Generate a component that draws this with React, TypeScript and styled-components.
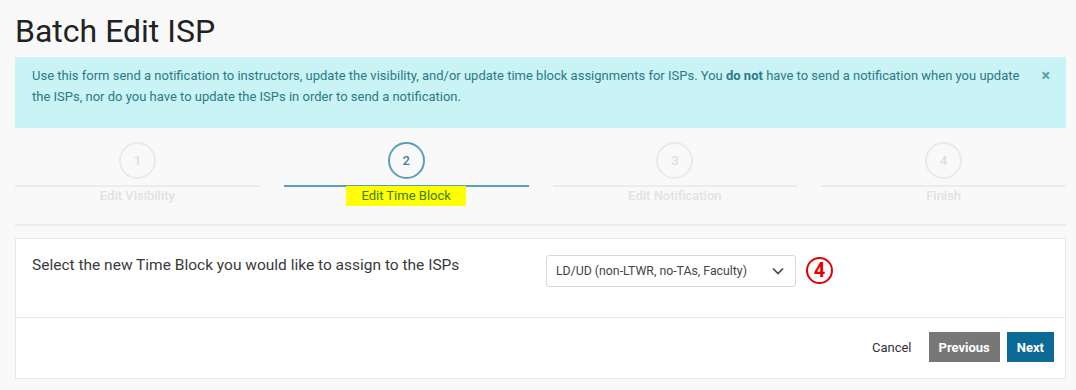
import * as React from 'react';
import styled, { createGlobalStyle } from 'styled-components';

const GlobalStyle = createGlobalStyle`
  html, body {
    margin: 0;
    padding: 0;
    background: #f9f9f9;
    font-family: Roboto, 'Liberation Sans', Arial, sans-serif;
  }
`;

const Page = styled.div`
  padding: 12px 10px 0 15px;
`;

const Title = styled.h1`
  margin: 0 0 6px;
  font-size: 32px;
  line-height: 39px;
  font-weight: 400;
  color: #222;
`;

const Alert = styled.div`
  display: flex;
  align-items: flex-start;
  background: #c9f3f5;
  color: #2b7a86;
  font-size: 13px;
  line-height: 21px;
  padding: 8px 16px 11px 17px;
  min-height: 52px;
`;

const AlertText = styled.p`
  margin: 0;
  flex: 1;
  padding-right: 12px;

  strong {
    font-weight: 700;
  }
`;

const CloseButton = styled.button`
  border: 0;
  background: none;
  color: #5aa0a8;
  font-size: 16px;
  font-weight: 700;
  line-height: 21px;
  padding: 0;
  cursor: pointer;
  font-family: inherit;
`;

const Stepper = styled.div`
  display: grid;
  grid-template-columns: repeat(4, 1fr);
  column-gap: 24px;
  padding: 14px 0 18px;
  border-bottom: 2px solid #ececec;
`;

const Step = styled.div`
  display: flex;
  flex-direction: column;
  align-items: center;
`;

const Circle = styled.div<{ $active?: boolean }>`
  width: 33px;
  height: 33px;
  border-radius: 50%;
  border: 2px solid ${(p) => (p.$active ? '#5b9fc0' : '#eaeaea')};
  color: ${(p) => (p.$active ? '#4a7a9a' : '#dedede')};
  display: flex;
  align-items: center;
  justify-content: center;
  font-size: 13px;
  font-weight: 500;
  margin-bottom: 6px;
`;

const StepLine = styled.div<{ $active?: boolean }>`
  align-self: stretch;
  height: 2px;
  background: ${(p) => (p.$active ? '#5b9fc0' : '#ececec')};
`;

const StepLabel = styled.div<{ $active?: boolean }>`
  font-size: 13px;
  line-height: 20px;
  font-weight: ${(p) => (p.$active ? 400 : 500)};
  color: ${(p) => (p.$active ? '#3b7d1a' : '#e2e2e2')};
  background: ${(p) => (p.$active ? '#ffff00' : 'transparent')};
  padding: 0 15px;
  margin-top: -1px;
`;

const Card = styled.div`
  margin-top: 12px;
  background: #fff;
  border: 1px solid #e8e8e8;
`;

const CardBody = styled.div`
  display: grid;
  grid-template-columns: 514px 1fr;
  padding: 16px 16px 30px;
  border-bottom: 1px solid #e6e6e6;
`;

const Prompt = styled.div`
  font-size: 15.5px;
  line-height: 20px;
  color: #3a3a3a;
`;

const SelectRow = styled.div`
  display: flex;
  align-items: center;
  gap: 10px;
`;

const SelectBox = styled.div`
  width: 250px;
  height: 32px;
  box-sizing: border-box;
  border: 1px solid #d6d9dc;
  border-radius: 3px;
  display: flex;
  align-items: center;
  justify-content: space-between;
  padding: 0 10px 0 9px;
  font-size: 12.3px;
  color: #444;
`;

const Marker = styled.div`
  width: 27px;
  height: 27px;
  box-sizing: border-box;
  border: 2px solid #e60000;
  border-radius: 50%;
  color: #e60000;
  font-size: 20px;
  font-weight: 700;
  display: flex;
  align-items: center;
  justify-content: center;
  line-height: 1;
  margin-top: -2px;
`;

const Footer = styled.div`
  display: flex;
  justify-content: flex-end;
  align-items: center;
  gap: 7px;
  padding: 14px 11px 16px;
`;

const LinkButton = styled.button`
  border: 0;
  background: none;
  font-family: inherit;
  font-size: 13px;
  color: #333;
  padding: 0 10px 0 0;
`;

const SolidButton = styled.button<{ $tone: 'grey' | 'blue' }>`
  border: 0;
  height: 30px;
  padding: 0 10px;
  font-family: inherit;
  font-size: 13px;
  font-weight: 700;
  color: #fff;
  background: ${(p) => (p.$tone === 'grey' ? '#777777' : '#0b6a96')};
`;

const steps = ['Edit Visibility', 'Edit Time Block', 'Edit Notification', 'Finish'];

export default function App() {
  return (
    <Page>
      <GlobalStyle />
      <Title>Batch Edit ISP</Title>
      <Alert>
        <AlertText>
          Use this form send a notification to instructors, update the visibility, and/or update time block
          assignments for ISPs. You <strong>do not</strong> have to send a notification when you update the
          ISPs, nor do you have to update the ISPs in order to send a notification.
        </AlertText>
        <CloseButton>×</CloseButton>
      </Alert>
      <Stepper>
        {steps.map((label, i) => (
          <Step key={label}>
            <Circle $active={i === 1}>{i + 1}</Circle>
            <StepLine $active={i === 1} />
            <StepLabel $active={i === 1}>{label}</StepLabel>
          </Step>
        ))}
      </Stepper>
      <Card>
        <CardBody>
          <Prompt>Select the new Time Block you would like to assign to the ISPs</Prompt>
          <SelectRow>
            <SelectBox>
              <span>LD/UD (non-LTWR, no-TAs, Faculty)</span>
              <svg width="14" height="14" viewBox="0 0 14 14" fill="none">
                <path d="M2 4.5 L7 9.5 L12 4.5" stroke="#444" strokeWidth="1.6" />
              </svg>
            </SelectBox>
            <Marker>4</Marker>
          </SelectRow>
        </CardBody>
        <Footer>
          <LinkButton>Cancel</LinkButton>
          <SolidButton $tone="grey">Previous</SolidButton>
          <SolidButton $tone="blue">Next</SolidButton>
        </Footer>
      </Card>
    </Page>
  );
}
